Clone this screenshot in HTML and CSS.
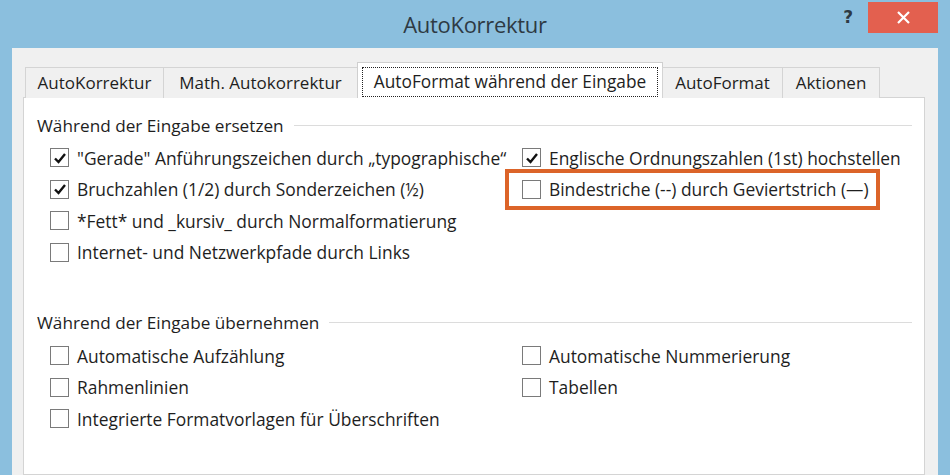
FILE: index.html
```html
<!DOCTYPE html>
<html lang="de">
<head>
<meta charset="utf-8">
<title>AutoKorrektur</title>
<link rel="stylesheet" href="styles.css">
</head>
<body>
<div class="window">
  <div class="titlebar">
    <div class="title-spacer"></div>
    <div class="title">AutoKorrektur</div>
    <div class="controls">
      <span class="help">?</span>
      <span class="close">
        <svg width="15" height="15" viewBox="0 0 15 15"><path d="M2 2 L13 13 M13 2 L2 13" stroke="#fff" stroke-width="2.2" fill="none"/></svg>
      </span>
    </div>
  </div>
  <div class="client">
    <div class="tabs">
      <div class="tab t1">AutoKorrektur</div>
      <div class="tab t2">Math. Autokorrektur</div>
      <div class="tab active"><span class="focus">AutoFormat während der Eingabe</span></div>
      <div class="tab t4">AutoFormat</div>
      <div class="tab t5">Aktionen</div>
    </div>
    <div class="panel">
      <div class="group">
        <div class="group-head"><span>Während der Eingabe ersetzen</span><i class="rule"></i></div>
        <div class="options">
          <label class="opt"><span class="box checked"><svg width="14" height="14" viewBox="0 0 14 14"><path d="M2 7.5 L5.5 11 L12 3" stroke="#111" stroke-width="2.4" fill="none"/></svg></span><span>"Gerade" Anführungszeichen durch „typographische“</span></label>
          <label class="opt"><span class="box checked"><svg width="14" height="14" viewBox="0 0 14 14"><path d="M2 7.5 L5.5 11 L12 3" stroke="#111" stroke-width="2.4" fill="none"/></svg></span><span>Englische Ordnungszahlen (1st) hochstellen</span></label>
          <label class="opt"><span class="box checked"><svg width="14" height="14" viewBox="0 0 14 14"><path d="M2 7.5 L5.5 11 L12 3" stroke="#111" stroke-width="2.4" fill="none"/></svg></span><span>Bruchzahlen (1/2) durch Sonderzeichen (½)</span></label>
          <label class="opt highlight"><span class="box"></span><span>Bindestriche (--) durch Geviertstrich (—)</span></label>
          <label class="opt"><span class="box"></span><span>*Fett* und _kursiv_ durch Normalformatierung</span></label>
          <span></span>
          <label class="opt"><span class="box"></span><span>Internet- und Netzwerkpfade durch Links</span></label>
          <span></span>
        </div>
      </div>
      <div class="group g2">
        <div class="group-head"><span>Während der Eingabe übernehmen</span><i class="rule"></i></div>
        <div class="options">
          <label class="opt"><span class="box"></span><span>Automatische Aufzählung</span></label>
          <label class="opt"><span class="box"></span><span>Automatische Nummerierung</span></label>
          <label class="opt"><span class="box"></span><span>Rahmenlinien</span></label>
          <label class="opt"><span class="box"></span><span>Tabellen</span></label>
          <label class="opt"><span class="box"></span><span>Integrierte Formatvorlagen für Überschriften</span></label>
          <span></span>
        </div>
      </div>
    </div>
  </div>
</div>
</body>
</html>
```
FILE: styles.css
```css
html, body {
  margin: 0;
  padding: 0;
}
body {
  width: 950px;
  height: 475px;
  overflow: hidden;
  font-family: "Open Sans", "Noto Sans", sans-serif;
  color: #1e1e1e;
}
.window {
  width: 950px;
  height: 475px;
  background: #8bbfde;
  display: flex;
  flex-direction: column;
}
.titlebar {
  height: 48px;
  display: grid;
  grid-template-columns: 1fr auto 1fr;
  align-items: start;
}
.title {
  font-size: 22px;
  color: #2e3a44;
  padding-top: 9px;
  letter-spacing: -0.3px;
}
.controls {
  display: flex;
  justify-content: flex-end;
  align-items: flex-start;
  padding-right: 12px;
}
.help {
  font-family: "DejaVu Sans", sans-serif;
  font-weight: bold;
  font-size: 17px;
  color: #2e3a44;
  margin-top: 7px;
  margin-right: 15px;
}
.close {
  width: 70px;
  height: 31px;
  margin-top: 2px;
  background: #e3604f;
  display: flex;
  align-items: center;
  justify-content: center;
}
.client {
  flex: 1;
  margin: 0 12px;
  background: #f0f0f0;
  padding: 14px 13px 0 11px;
  display: flex;
  flex-direction: column;
  min-height: 0;
}
.tabs {
  display: flex;
  align-items: flex-end;
  padding-left: 2px;
  height: 36px;
  position: relative;
  z-index: 1;
  margin-bottom: -1px;
}
.tab {
  height: 31px;
  box-sizing: border-box;
  border: 1px solid #d4d4d4;
  border-bottom: none;
  background: #f0f0f0;
  font-size: 17px;
  line-height: 30px;
  text-align: center;
  margin-right: -1px;
  white-space: nowrap;
}
.t1 { width: 139px; }
.t2 { width: 195px; }
.t4 { width: 121px; }
.t5 { width: 98px; }
.tab.active {
  width: 306px;
  height: 36px;
  background: #fff;
  border-color: #cfcfcf;
  padding: 4px 4px 0;
  line-height: 28px;
  font-size: 17.3px;
}
.focus {
  display: block;
  border: 1px dotted #222;
  height: 30px;
  box-sizing: border-box;
}
.panel {
  flex: 1;
  background: #fff;
  border: 1px solid #d4d4d4;
  padding: 14px 12px 0 13px;
}
.group-head {
  display: flex;
  align-items: center;
  font-size: 17.2px;
  height: 26px;
}
.rule {
  flex: 1;
  height: 1px;
  background: #dcdcdc;
  margin-left: 10px;
}
.options {
  display: grid;
  grid-template-columns: 472px 1fr;
  grid-auto-rows: 31.5px;
  padding-left: 13px;
  margin-top: 4px;
}
.g2 {
  margin-top: 41px;
}
.g2 .options {
  margin-top: 5px;
}
.opt {
  display: flex;
  align-items: center;
  font-size: 17.4px;
  white-space: nowrap;
}
.box {
  width: 19px;
  height: 19px;
  box-sizing: border-box;
  border: 1px solid #7a7a7a;
  background: #fff;
  margin-right: 8px;
  display: flex;
  align-items: center;
  justify-content: center;
  flex: none;
}
.highlight {
  position: relative;
}
.highlight::after {
  content: "";
  position: absolute;
  left: -17px;
  top: -5px;
  width: 375px;
  height: 41px;
  box-sizing: border-box;
  border: 4px solid #dc6429;
}
```
